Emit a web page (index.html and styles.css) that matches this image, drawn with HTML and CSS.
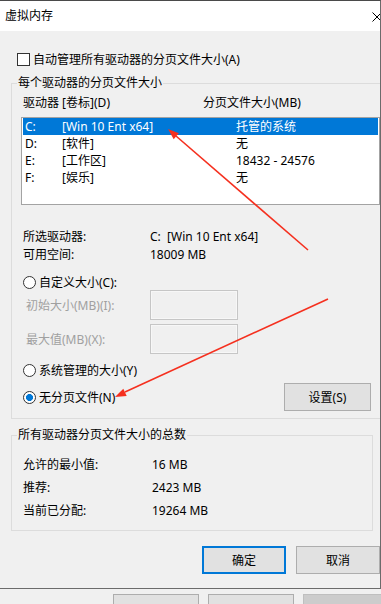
FILE: index.html
```html
<!DOCTYPE html>
<html lang="zh-CN">
<head>
  <meta charset="UTF-8" />
  <meta name="viewport" content="width=device-width, initial-scale=1.0" />
  <title>虚拟内存</title>
  <link rel="stylesheet" href="styles.css">
</head>
<body>
  <div class="dialog">
    <div class="titlebar">
      <span class="title">虚拟内存</span>
      <svg class="close" width="8" height="10" viewBox="0 0 8 10">
        <path d="M0.5 0.5 L9.5 9.5 M0.5 9.5 L9.5 0.5" stroke="#000" stroke-width="1" fill="none" />
      </svg>
    </div>

    <div class="content">
      <div class="check-row">
        <span class="checkbox"></span>自动管理所有驱动器的分页文件大小(A)
      </div>

      <fieldset class="group group-drives">
        <legend>每个驱动器的分页文件大小</legend>
        <div class="list-head">
          <span class="head-drive">驱动器 [卷标](D)</span>
          <span>分页文件大小(MB)</span>
        </div>
        <div class="listbox">
          <div class="list-row selected"><span class="c1">C:</span><span class="c2">[Win 10 Ent x64]</span><span>托管的系统</span></div>
          <div class="list-row"><span class="c1">D:</span><span class="c2">[软件]</span><span>无</span></div>
          <div class="list-row"><span class="c1">E:</span><span class="c2">[工作区]</span><span>18432 - 24576</span></div>
          <div class="list-row"><span class="c1">F:</span><span class="c2">[娱乐]</span><span>无</span></div>
        </div>

        <div class="info first">
          <span class="info-label">所选驱动器:</span><span>C:&nbsp; [Win 10 Ent x64]</span>
        </div>
        <div class="info">
          <span class="info-label">可用空间:</span><span>18009 MB</span>
        </div>

        <div class="radio-row custom">
          <span class="radio"></span>自定义大小(C):
        </div>
        <div class="size-row">
          <span class="size-label">初始大小(MB)(I):</span><span class="size-input"></span>
        </div>
        <div class="size-row second">
          <span class="size-label">最大值(MB)(X):</span><span class="size-input"></span>
        </div>
        <div class="radio-row system">
          <span class="radio"></span>系统管理的大小(Y)
        </div>
        <div class="radio-row nofile">
          <span class="radio checked"></span>无分页文件(N)
          <button class="btn set-btn">设置(S)</button>
        </div>
      </fieldset>

      <fieldset class="group group-total">
        <legend>所有驱动器分页文件大小的总数</legend>
        <div class="total first"><span class="total-label">允许的最小值:</span><span>16 MB</span></div>
        <div class="total"><span class="total-label">推荐:</span><span>2423 MB</span></div>
        <div class="total"><span class="total-label">当前已分配:</span><span>19264 MB</span></div>
      </fieldset>

      <div class="actions">
        <button class="btn default">确定</button>
        <button class="btn">取消</button>
      </div>
    </div>
  </div>

  <div class="behind">
    <button class="btn small">确定</button>
    <button class="btn small">取消</button>
    <button class="btn small disabled">应用(A)</button>
  </div>

  <!-- red annotation arrows -->
  <svg class="arrows" width="381" height="604" viewBox="0 0 381 604">
    <line x1="308" y1="250" x2="176" y2="136" stroke="#f5301f" stroke-width="1.6" />
    <polygon points="168,129 178.9,133.2 173.7,139.2" fill="#f5301f" />
    <line x1="328" y1="299" x2="125" y2="392" stroke="#f5301f" stroke-width="1.6" />
    <polygon points="115,397 123.3,388.8 126.7,396" fill="#f5301f" />
  </svg>
</body>
</html>
```

FILE: styles.css
```css
body {
  margin: 0;
  height: 604px;
  overflow: hidden;
  position: relative;
  background: #f0f0f0;
  font-family: 'Noto Sans', 'Noto Sans CJK SC', sans-serif;
  font-size: 12px;
  color: #000;
}

.dialog {
  width: 380px;
  border-top: 1px solid #4a4a4a;
  border-right: 1px solid #6b6b6b;
  border-bottom: 1px solid #6b6b6b;
  overflow: hidden;
}

.titlebar {
  height: 30px;
  background: #fff;
  display: flex;
  align-items: center;
  justify-content: space-between;
  padding-left: 5px;
}

.title {
  line-height: 16px;
}

.close {
  display: block;
  margin-top: 1px;
}

.content {
  height: 557px;
  background: #f0f0f0;
  overflow: hidden;
}

.check-row {
  display: flex;
  align-items: center;
  height: 16px;
  margin: 20px 0 0 17px;
}

.checkbox {
  width: 13px;
  height: 13px;
  box-sizing: border-box;
  border: 1px solid #333;
  background: #fff;
  margin-right: 3px;
}

.group {
  margin: 8px 0 0 11px;
  padding: 0 0 7px 11px;
  border: 1px solid #dcdcdc;
  box-sizing: border-box;
  min-width: 0;
}

.group legend {
  line-height: 16px;
  padding: 0 1px;
  margin-left: -6px;
}

.group-drives {
  width: 376px;
}

.group-total {
  width: 362px;
  padding-bottom: 8px;
}

.list-head {
  display: flex;
  line-height: 16px;
  margin-top: 4px;
}

.head-drive {
  width: 180px;
}

.listbox {
  width: 359px;
  height: 88px;
  box-sizing: border-box;
  margin: 6px 0 0 -2px;
  padding: 0 1px;
  border: 1px solid #a3a3a3;
  background: #fff;
}

.list-row {
  display: flex;
  height: 17px;
  line-height: 17px;
  padding-left: 2px;
  white-space: nowrap;
}

.list-row.selected {
  background: #0078d7;
  color: #fff;
}

.c1 {
  width: 37px;
}

.c2 {
  width: 174px;
}

.info {
  display: flex;
  line-height: 18px;
}

.info.first {
  margin-top: 23px;
}

.info-label {
  width: 127px;
}

.radio-row {
  display: flex;
  align-items: center;
  height: 16px;
}

.radio-row.custom {
  margin-top: 10px;
}

.radio-row.system {
  margin-top: 8px;
}

.radio-row.nofile {
  height: 28px;
  width: 348px;
  margin-top: 5px;
}

.radio {
  width: 13px;
  height: 13px;
  box-sizing: border-box;
  border: 1px solid #333;
  border-radius: 50%;
  background: #fff;
  margin-right: 3px;
}

.radio.checked {
  background: radial-gradient(circle, #0078d7 3.2px, #fff 3.8px);
}

.size-row {
  display: flex;
  align-items: center;
  height: 30px;
  padding-left: 3px;
  color: #a0a0a0;
}

.size-row.second {
  margin-top: 4px;
}

.size-label {
  width: 124px;
}

.size-input {
  width: 88px;
  height: 30px;
  box-sizing: border-box;
  border: 1px solid #c6c6c6;
  box-shadow: inset 0 0 0 1px #f7f7f7;
  background: #f0f0f0;
}

.btn {
  font-family: inherit;
  font-size: 12px;
  color: #000;
  background: #e1e1e1;
  border: 1px solid #adadad;
  width: 86px;
  height: 28px;
  padding: 0;
  margin: 0;
}

.set-btn {
  margin-left: auto;
  width: 87px;
}

.total {
  display: flex;
  line-height: 23px;
}

.total.first {
  margin-top: 10px;
}

.total-label {
  width: 129px;
}

.actions {
  display: flex;
  gap: 10px;
  margin: 15px 0 0 202px;
}

.btn.default {
  border: 2px solid #0078d7;
}

.behind {
  display: flex;
  padding: 5px 0 0 113px;
  gap: 9px;
}

.btn.small {
  height: 24px;
  flex-shrink: 0;
  padding-top: 10px;
}

.btn.disabled {
  background: #cccccc;
  border-color: #bfbfbf;
  color: #838383;
}

.arrows {
  position: absolute;
  top: 0;
  left: 0;
  pointer-events: none;
}
```
